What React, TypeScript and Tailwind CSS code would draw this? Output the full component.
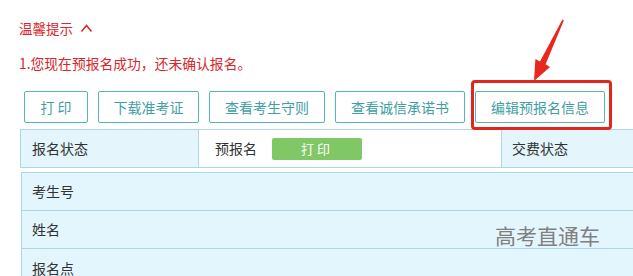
import React from "react";

const font = { fontFamily: '"Noto Sans CJK SC", "Noto Sans", sans-serif' };

function Btn({ children, w }: { children: React.ReactNode; w: string }) {
  return (
    <div
      className={`h-[32px] ${w} flex items-center justify-center border border-[#52b8b4] rounded-[2px] text-[14px] text-[#3f9fa3] bg-white`}
    >
      {children}
    </div>
  );
}

export default function App() {
  return (
    <div
      className="relative w-[633px] h-[276px] overflow-hidden bg-white text-[#333]"
      style={font}
    >
      <div className="pl-[19px] pt-[18px]">
        <div className="flex items-center h-[20px] text-[13.5px] text-[#d9262c]">
          <span>温馨提示</span>
          <svg width="13" height="10" viewBox="0 0 13 10" className="ml-[7px]">
            <polyline
              points="1.5,8.5 6.5,2.5 11.5,8.5"
              fill="none"
              stroke="#d9262c"
              strokeWidth="1.5"
            />
          </svg>
        </div>
        <div className="mt-[15px] h-[20px] leading-[20px] text-[13.8px] text-[#d9262c]">
          1.您现在预报名成功，还未确认报名。
        </div>
      </div>

      <div className="mt-[18px] pl-[24px] flex gap-[10px]">
        <Btn w="w-[64px]">打&nbsp;印</Btn>
        <Btn w="w-[101px]">下载准考证</Btn>
        <Btn w="w-[116px]">查看考生守则</Btn>
        <Btn w="w-[130px]">查看诚信承诺书</Btn>
        <Btn w="w-[130px]">编辑预报名信息</Btn>
      </div>

      <div className="ml-[20px] mt-[6px] w-[700px] flex h-[39px] border border-[#aed6e4] text-[14px]">
        <div className="w-[177px] bg-[#e4f5fc] flex items-center pl-[11px]">报名状态</div>
        <div className="w-[303px] border-l border-[#aed6e4] bg-white flex items-center pl-[16px]">
          <span>预报名</span>
          <div className="ml-[15px] w-[90px] h-[22px] rounded-[2px] bg-[#80c865] text-white text-[13px] flex items-center justify-center tracking-[3px]">
            打印
          </div>
        </div>
        <div className="flex-1 border-l border-[#aed6e4] bg-[#e4f5fc] flex items-center pl-[10px]">
          交费状态
        </div>
      </div>

      <div className="ml-[21px] mt-[4px] w-[700px] border border-[#aed6e4] bg-[#e4f6fd] text-[14px]">
        <div className="h-[38px] flex items-center pl-[10px] border-b border-[#aed6e4]">考生号</div>
        <div className="h-[38px] flex items-center pl-[10px] border-b border-[#aed6e4]">姓名</div>
        <div className="h-[38px] flex items-center pl-[10px]">报名点</div>
      </div>

      <div className="absolute left-[495px] top-[222px] text-[21px] leading-[26px] text-[#808080]">
        高考直通车
      </div>

      <div className="absolute left-[471px] top-[80px] w-[141px] h-[50px] border-[3px] border-[#e2261e] rounded-[4px]" />

      <svg className="absolute left-0 top-0" width="633" height="276" viewBox="0 0 633 276">
        <polygon
          points="563.8,20.4 545.6,64.3 550,67 534,81 535.4,59 540,61.6 562.4,19.6"
          fill="#e8281f"
        />
      </svg>
    </div>
  );
}
